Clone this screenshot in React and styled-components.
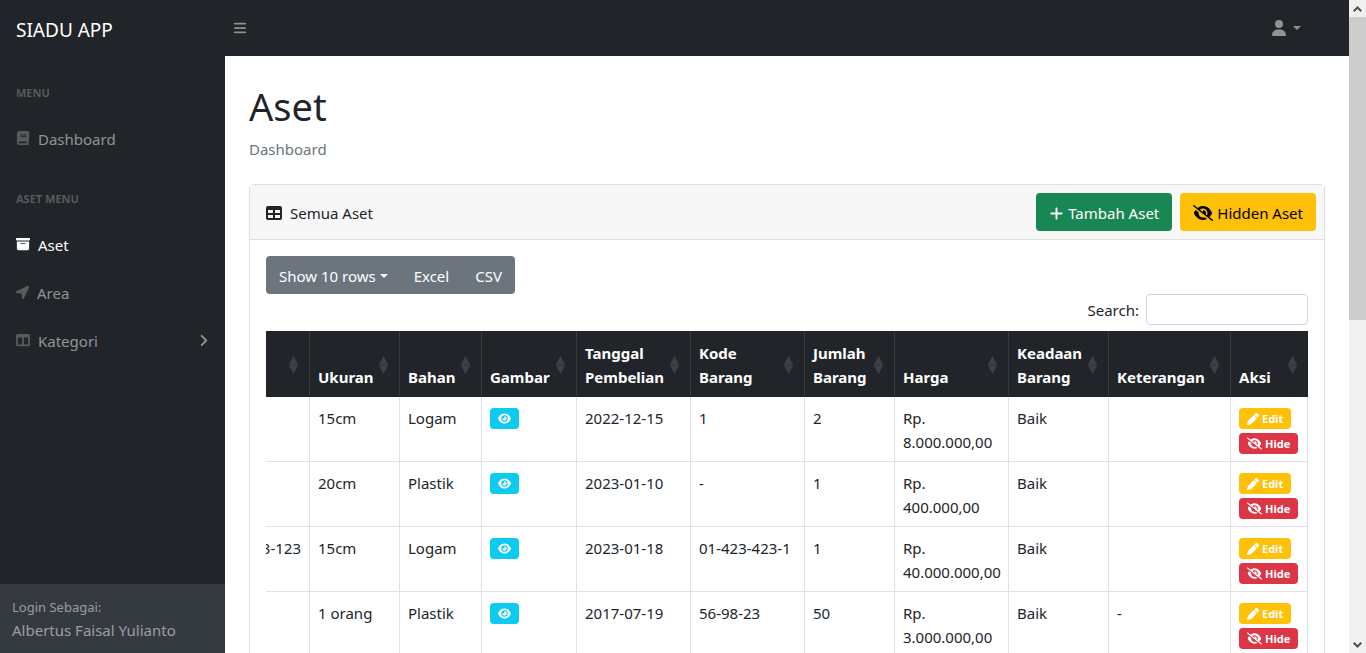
import React from 'react';
import styled, { createGlobalStyle } from 'styled-components';
import {
  FaBars, FaBook, FaBoxArchive, FaTableColumns, FaUser, FaTable, FaPlus,
  FaEye, FaEyeSlash, FaPen, FaAngleRight,
} from 'react-icons/fa6';
import { FaLocationArrow } from 'react-icons/fa';

const Global = createGlobalStyle`
  *, *::before, *::after { box-sizing: border-box; }
  body {
    margin: 0;
    font-family: "Segoe UI", "Noto Sans", sans-serif;
    font-size: 15px;
    line-height: 24px;
    color: #212529;
    background: #fff;
  }
  button, input { font: inherit; color: inherit; margin: 0; }
  button { border: 0; cursor: pointer; }
  svg { flex: none; display: block; }
`;

const Shell = styled.div`
  display: flex;
  height: 100vh;
  overflow: hidden;
`;

const Sidebar = styled.aside`
  flex: 0 0 225px;
  display: flex;
  flex-direction: column;
  background: #212529;
`;

const Brand = styled.a`
  height: 56px;
  padding: 4px 16px 0;
  display: flex;
  align-items: center;
  font-size: 19px;
  color: #fff;
  text-decoration: none;
`;

const Menu = styled.nav`
  flex: 1;
  min-height: 0;
  overflow: hidden;
`;

const MenuHeading = styled.div`
  padding: 28px 16px 12px;
  font-size: 11px;
  line-height: 18px;
  font-weight: 700;
  text-transform: uppercase;
  color: rgba(255, 255, 255, 0.25);
`;

const MenuLink = styled.a`
  display: flex;
  align-items: center;
  gap: 8px;
  height: 48px;
  padding: 0 16px;
  text-decoration: none;
  color: ${(p) => (p.$active ? '#fff' : 'rgba(255, 255, 255, 0.5)')};
  svg { color: ${(p) => (p.$active ? '#fff' : 'rgba(255, 255, 255, 0.25)')}; }
`;

const MenuLabel = styled.span`
  flex: 1;
  padding-top: 2px;
`;

const MenuArrow = styled.span`
  margin-right: -2px;
  svg { color: rgba(255, 255, 255, 0.5); }
`;

const SidebarFooter = styled.div`
  padding: 13px 12px 11px;
  background: #343a40;
  color: rgba(255, 255, 255, 0.5);
`;

const Small = styled.div`
  font-size: 13px;
  line-height: 21px;
`;

const Page = styled.div`
  flex: 1;
  min-width: 0;
  display: flex;
  flex-direction: column;
`;

const TopBar = styled.header`
  flex: 0 0 56px;
  display: flex;
  align-items: center;
  justify-content: space-between;
  padding: 0 48px 0 8px;
  background: #212529;
`;

const IconButton = styled.button`
  display: flex;
  align-items: center;
  gap: 6px;
  padding: 0;
  background: none;
  color: rgba(255, 255, 255, 0.5);
`;

const Caret = styled.span`
  border-top: 4px solid;
  border-left: 4px solid transparent;
  border-right: 4px solid transparent;
`;

const Main = styled.main`
  flex: 1;
  min-height: 0;
  overflow: hidden;
  padding: 26px 24px 24px;
`;

const Title = styled.h1`
  margin: 0 0 7px;
  font-size: 38px;
  line-height: 48px;
  font-weight: 400;
`;

const Breadcrumb = styled.div`
  margin-bottom: 23px;
  color: #6c757d;
`;

const Card = styled.section`
  border: 1px solid #dfdfdf;
  border-radius: 4px;
`;

const CardHeader = styled.div`
  display: flex;
  align-items: center;
  gap: 8px;
  padding: 8px 8px 8px 16px;
  background: #f7f7f7;
  border-bottom: 1px solid #dfdfdf;
`;

const CardTitle = styled.div`
  flex: 1;
  display: flex;
  align-items: center;
  gap: 8px;
  padding-top: 2px;
`;

const tones = {
  green: ['#198754', '#fff'],
  yellow: ['#ffc107', '#000'],
};

const Button = styled.button`
  display: flex;
  align-items: center;
  gap: 4px;
  height: 38px;
  padding: 2px 13px 0;
  border-radius: 4px;
  background: ${(p) => tones[p.$tone][0]};
  color: ${(p) => tones[p.$tone][1]};
`;

const CardBody = styled.div`
  padding: 16px;
`;

const ButtonGroup = styled.div`
  display: inline-flex;
  vertical-align: top;
  border-radius: 4px;
  overflow: hidden;
  background: #6c757d;
  color: #fff;
`;

const GroupButton = styled.button`
  display: flex;
  align-items: center;
  gap: 4px;
  height: 38px;
  padding: 2px 13px 0;
  background: none;
`;

const SearchRow = styled.label`
  display: flex;
  align-items: center;
  justify-content: flex-end;
  gap: 7px;
  margin-bottom: 6px;
`;

const SearchInput = styled.input`
  width: 162px;
  height: 31px;
  padding: 4px 8px;
  border: 1px solid #ced4da;
  border-radius: 4px;
  background: #fff;
`;

const TableViewport = styled.div`
  display: flex;
  justify-content: flex-end;
  overflow: hidden;
`;

const Table = styled.table`
  flex: none;
  width: 1140px;
  min-width: 100%;
  table-layout: fixed;
  border-collapse: separate;
  border-spacing: 0;
`;

const HeadCell = styled.th`
  width: ${(p) => p.$width}px;
  padding: 9px 10px 7px 8px;
  border: 1px solid #212529;
  border-left-color: #373b3e;
  border-right-width: 0;
  background: #212529;
  color: #fff;
  text-align: left;
`;

const HeadContent = styled.div`
  display: flex;
  align-items: center;
  min-height: 48px;
`;

const HeadLabel = styled.span`
  flex: 1;
  min-width: 0;
  align-self: flex-end;
`;

const Cell = styled.td`
  padding: 9px 8px 7px;
  border-left: 1px solid #dee2e6;
  border-bottom: 1px solid #dee2e6;
  vertical-align: top;
  &:first-child { text-align: right; }
  &:last-child { border-right: 1px solid #dee2e6; }
`;

const BadgeStack = styled.div`
  display: flex;
  flex-direction: column;
  align-items: flex-start;
  gap: 4px;
  padding-top: 2px;
`;

const Badge = styled.button`
  display: flex;
  align-items: center;
  gap: 3px;
  height: 21px;
  padding: 0 8px;
  border-radius: 4px;
  background: ${(p) => p.$color};
  color: #fff;
  font-size: 11px;
  line-height: 20px;
  font-weight: 700;
`;

const Scrollbar = styled.div`
  flex: 0 0 17px;
  display: flex;
  flex-direction: column;
  align-items: center;
  background: #f0f0f0;
  color: #505050;
`;

const ScrollArrow = styled.div`
  height: 17px;
  display: flex;
  align-items: center;
`;

const ScrollTrack = styled.div`
  flex: 1;
  width: 100%;
`;

const ScrollThumb = styled.div`
  height: 49%;
  background: #cdcdcd;
`;

const SortIcon = () => (
  <svg width="11" height="18" viewBox="0 0 11 18" fill="#3d4145">
    <path d="M5.5 0 10.200 8.700H.8zM5.500 18 .8 9.300h9.400z" />
  </svg>
);

const Chevron = ({ down }) => (
  <svg width="9" height="6" viewBox="0 0 9 6" fill="none" stroke="currentColor" strokeWidth="2">
    <path d={down ? 'M.7.7l3.800 3.800L8.300.7' : 'M.7 5.300l3.800-3.800 3.800 3.800'} />
  </svg>
);

const columns = [
  ['', 141], ['Ukuran', 90], ['Bahan', 82], ['Gambar', 95], ['Tanggal Pembelian', 114],
  ['Kode Barang', 114], ['Jumlah Barang', 90], ['Harga', 114], ['Keadaan Barang', 100],
  ['Keterangan', 122], ['Aksi', 78],
];

const rows = [
  ['', '15cm', 'Logam', '2022-12-15', '1', '2', 'Rp. 8.000.000,00', 'Baik', ''],
  ['', '20cm', 'Plastik', '2023-01-10', '-', '1', 'Rp. 400.000,00', 'Baik', ''],
  ['123-123', '15cm', 'Logam', '2023-01-18', '01-423-423-1', '1', 'Rp. 40.000.000,00', 'Baik', ''],
  ['', '1 orang', 'Plastik', '2017-07-19', '56-98-23', '50', 'Rp. 3.000.000,00', 'Baik', '-'],
];

function AssetRow({ data }) {
  const [merk, ukuran, bahan, ...rest] = data;
  return (
    <tr>
      <Cell>{merk}</Cell>
      <Cell>{ukuran}</Cell>
      <Cell>{bahan}</Cell>
      <Cell>
        <BadgeStack>
          <Badge $color="#0dcaf0" aria-label="Lihat gambar"><FaEye size={13} /></Badge>
        </BadgeStack>
      </Cell>
      {rest.map((value, i) => <Cell key={i}>{value}</Cell>)}
      <Cell>
        <BadgeStack>
          <Badge $color="#ffc107"><FaPen size={12} />Edit</Badge>
          <Badge $color="#dc3545"><FaEyeSlash size={15} />Hide</Badge>
        </BadgeStack>
      </Cell>
    </tr>
  );
}

export default function App() {
  return (
    <>
      <Global />
      <Shell>
        <Sidebar>
          <Brand href="#">SIADU APP</Brand>
          <Menu>
            <MenuHeading>Menu</MenuHeading>
            <MenuLink href="#"><FaBook size={14} /><MenuLabel>Dashboard</MenuLabel></MenuLink>
            <MenuHeading>Aset Menu</MenuHeading>
            <MenuLink href="#" $active><FaBoxArchive size={14} /><MenuLabel>Aset</MenuLabel></MenuLink>
            <MenuLink href="#"><FaLocationArrow size={13} /><MenuLabel>Area</MenuLabel></MenuLink>
            <MenuLink href="#">
              <FaTableColumns size={14} />
              <MenuLabel>Kategori</MenuLabel>
              <MenuArrow><FaAngleRight size={15} /></MenuArrow>
            </MenuLink>
          </Menu>
          <SidebarFooter>
            <Small>Login Sebagai:</Small>
            Albertus Faisal Yulianto
          </SidebarFooter>
        </Sidebar>
        <Page>
          <TopBar>
            <IconButton aria-label="Menu"><FaBars size={14} /></IconButton>
            <IconButton aria-label="Akun"><FaUser size={16} /><Caret /></IconButton>
          </TopBar>
          <Main>
            <Title>Aset</Title>
            <Breadcrumb>Dashboard</Breadcrumb>
            <Card>
              <CardHeader>
                <CardTitle><FaTable size={16} />Semua Aset</CardTitle>
                <Button $tone="green"><FaPlus size={15} />Tambah Aset</Button>
                <Button $tone="yellow"><FaEyeSlash size={20} />Hidden Aset</Button>
              </CardHeader>
              <CardBody>
                <ButtonGroup>
                  <GroupButton>Show 10 rows<Caret /></GroupButton>
                  <GroupButton>Excel</GroupButton>
                  <GroupButton>CSV</GroupButton>
                </ButtonGroup>
                <SearchRow>
                  Search:
                  <SearchInput type="search" />
                </SearchRow>
                <TableViewport>
                  <Table>
                    <thead>
                      <tr>
                        {columns.map(([label, width], i) => (
                          <HeadCell key={i} $width={width}>
                            <HeadContent>
                              <HeadLabel>{label}</HeadLabel>
                              <SortIcon />
                            </HeadContent>
                          </HeadCell>
                        ))}
                      </tr>
                    </thead>
                    <tbody>
                      {rows.map((row, i) => <AssetRow key={i} data={row} />)}
                    </tbody>
                  </Table>
                </TableViewport>
              </CardBody>
            </Card>
          </Main>
        </Page>
        <Scrollbar>
          <ScrollArrow><Chevron /></ScrollArrow>
          <ScrollTrack><ScrollThumb /></ScrollTrack>
          <ScrollArrow><Chevron down /></ScrollArrow>
        </Scrollbar>
      </Shell>
    </>
  );
}
